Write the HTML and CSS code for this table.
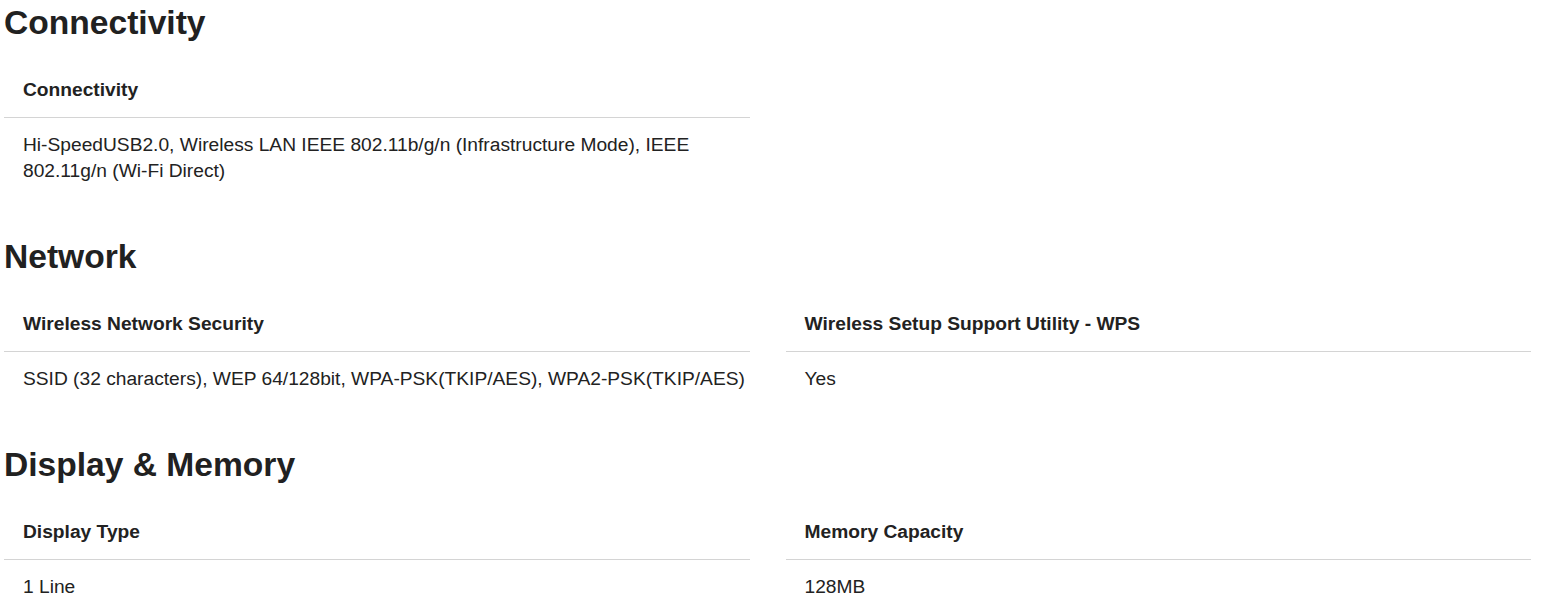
FILE: index.html
```html
<!DOCTYPE html>
<html lang="en">
<head>
<meta charset="utf-8">
<title>Specifications</title>
<link rel="stylesheet" href="styles.css">
</head>
<body>
<main class="specs">
  <section class="spec-group">
    <h2 class="spec-title">Connectivity</h2>
    <div class="spec-grid">
      <div class="spec-item">
        <div class="spec-label">Connectivity</div>
        <div class="spec-value">Hi-SpeedUSB2.0, Wireless LAN IEEE 802.11b/g/n (Infrastructure Mode), IEEE 802.11g/n (Wi-Fi Direct)</div>
      </div>
    </div>
  </section>
  <section class="spec-group">
    <h2 class="spec-title">Network</h2>
    <div class="spec-grid">
      <div class="spec-item">
        <div class="spec-label">Wireless Network Security</div>
        <div class="spec-value">SSID (32 characters), WEP 64/128bit, WPA-PSK(TKIP/AES), WPA2-PSK(TKIP/AES)</div>
      </div>
      <div class="spec-item">
        <div class="spec-label">Wireless Setup Support Utility - WPS</div>
        <div class="spec-value">Yes</div>
      </div>
    </div>
  </section>
  <section class="spec-group">
    <h2 class="spec-title">Display &amp; Memory</h2>
    <div class="spec-grid">
      <div class="spec-item">
        <div class="spec-label">Display Type</div>
        <div class="spec-value">1 Line</div>
      </div>
      <div class="spec-item">
        <div class="spec-label">Memory Capacity</div>
        <div class="spec-value">128MB</div>
      </div>
    </div>
  </section>
</main>
</body>
</html>
```
FILE: styles.css
```css
html, body {
  margin: 0;
  padding: 0;
  background: #ffffff;
}
body {
  font-family: "Liberation Sans", Arial, Helvetica, sans-serif;
  color: #222222;
}
.specs {
  width: 1527px;
  padding: 3px 0 0 4px;
  display: flex;
  flex-direction: column;
  gap: 39px;
}
.spec-title {
  margin: 0;
  font-size: 33.6px;
  line-height: 40px;
  font-weight: 700;
  color: #212121;
}
.spec-grid {
  margin-top: 20px;
  display: grid;
  grid-template-columns: 1fr 1fr;
  column-gap: 36px;
}
.spec-label {
  font-size: 19.2px;
  line-height: 26px;
  font-weight: 700;
  padding: 14px 4px 14px 19px;
  border-bottom: 1px solid #d4d4d4;
}
.spec-value {
  font-size: 19.2px;
  line-height: 26px;
  padding: 14px 0 14px 19px;
}
```
